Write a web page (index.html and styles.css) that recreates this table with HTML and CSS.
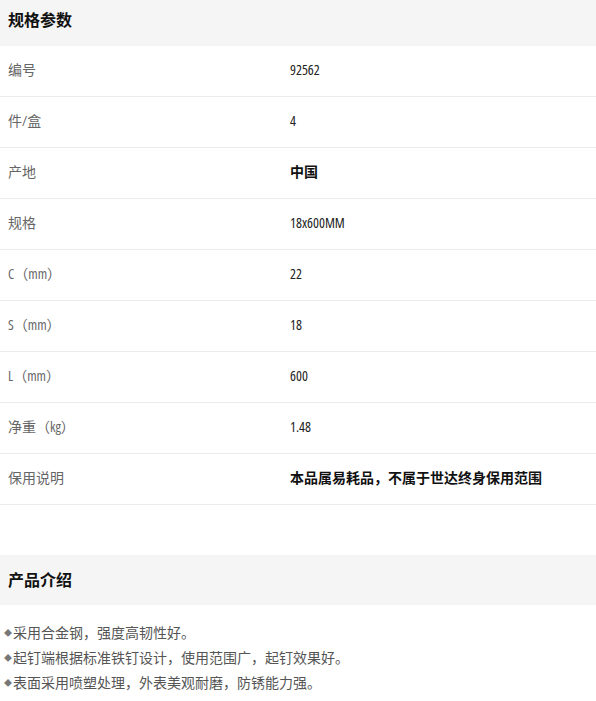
FILE: index.html
```html
<!DOCTYPE html>
<html lang="zh-CN">
<head>
  <meta charset="UTF-8" />
  <title>规格参数</title>
  <link rel="stylesheet" href="styles.css">
</head>
<body>
  <div class="section-title">规格参数</div>
  <div class="spec-table">
    <div class="row"><div class="label">编号</div><div class="value">92562</div></div>
    <div class="row"><div class="label">件/盒</div><div class="value">4</div></div>
    <div class="row"><div class="label">产地</div><div class="value strong">中国</div></div>
    <div class="row"><div class="label">规格</div><div class="value">18x600MM</div></div>
    <div class="row"><div class="label">C（mm）</div><div class="value">22</div></div>
    <div class="row"><div class="label">S（mm）</div><div class="value">18</div></div>
    <div class="row"><div class="label">L（mm）</div><div class="value">600</div></div>
    <div class="row"><div class="label">净重（kg）</div><div class="value">1.48</div></div>
    <div class="row"><div class="label">保用说明</div><div class="value strong">本品属易耗品，不属于世达终身保用范围</div></div>
  </div>

  <div class="section-title intro-title">产品介绍</div>
  <ul class="intro-list">
    <li>采用合金钢，强度高韧性好。</li>
    <li>起钉端根据标准铁钉设计，使用范围广，起钉效果好。</li>
    <li>表面采用喷塑处理，外表美观耐磨，防锈能力强。</li>
  </ul>
</body>
</html>
```

FILE: styles.css
```css
body {
  margin: 0;
  font-family: "Open Sans", "Noto Sans CJK SC", sans-serif;
  font-stretch: 75%;
  background: #fff;
  color: #333;
}
.section-title {
  background: #f5f5f5;
  height: 46px;
  line-height: 40px;
  padding-left: 8px;
  font-size: 16px;
  font-weight: bold;
  color: #111;
}
.spec-table {
  display: flex;
  flex-direction: column;
}
.row {
  display: grid;
  grid-template-columns: 290px 1fr;
  height: 46px;
  padding-bottom: 4px;
  align-items: center;
  border-bottom: 1px solid #ebebeb;
  font-size: 14px;
}
.label {
  padding-left: 8px;
  color: #666;
}
.value {
  color: #222;
  font-size: 14px;
}
.value.strong {
  font-weight: bold;
  color: #111;
}
.intro-title {
  margin-top: 50px;
  height: 50px;
  line-height: 50px;
}
.intro-list {
  list-style: none;
  margin: 15px 0 0;
  padding: 0 0 0 4px;
  font-size: 14px;
  color: #555;
  line-height: 25px;
}
.intro-list li::before {
  content: "◆";
  font-size: 8px;
  color: #777;
  margin-right: 1px;
  vertical-align: 2px;
}
```
